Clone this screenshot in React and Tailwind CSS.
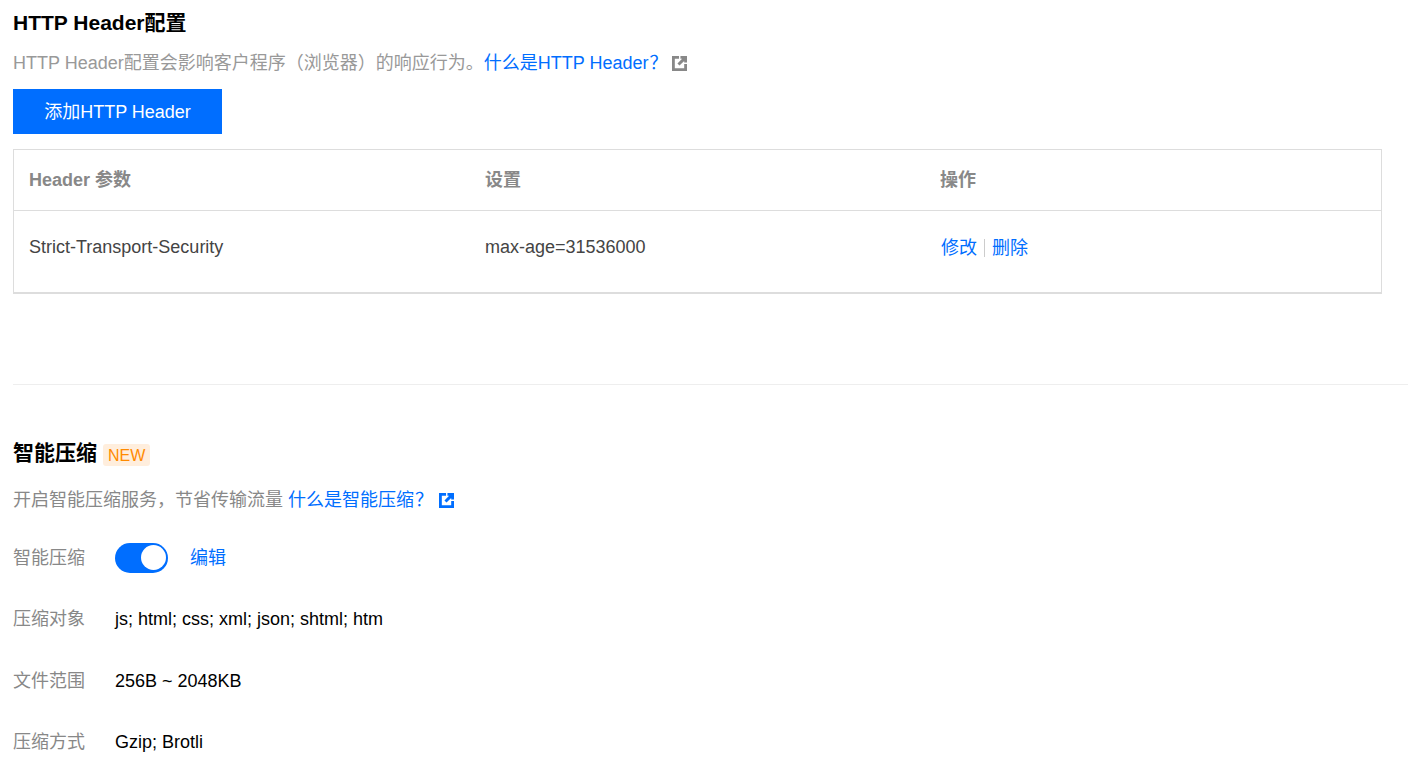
const fontStack = { fontFamily: '"Liberation Sans", "Noto Sans CJK SC", sans-serif' };

const ExternalIcon = ({ className }) => (
  <svg viewBox="0 0 16 16" className={className}>
    <path fill="currentColor" fillRule="evenodd" d="M0 0h7.5v3H3v10h10V8.5h3V16H0zM9 0h7v7h-3V5.2L8 10.2 5.8 8l5-5H9z" />
  </svg>
);

const InfoRow = ({ label, children }) => (
  <div className="flex items-center h-[61.3px]">
    <span className="w-[102px] text-[#888888]">{label}</span>
    {children}
  </div>
);

export default function App() {
  return (
    <div className="w-[1408px] h-[765px] overflow-hidden bg-white pl-[13px] text-[18px] text-black" style={fontStack}>
      <h2 className="h-[46px] pt-[9px] leading-[28px] text-[21px] font-bold">HTTP Header配置</h2>
      <p className="flex items-center h-[35px] text-[#999999]">
        HTTP Header配置会影响客户程序（浏览器）的响应行为。
        <a className="text-[#006eff]">什么是HTTP Header<span className="ml-px">？</span></a>
        <ExternalIcon className="w-[15px] h-[15px] text-[#888888] ml-[5px]" />
      </p>
      <button className="block mt-[8px] w-[209px] h-[45px] pt-[1px] bg-[#006eff] text-white">添加HTTP Header</button>

      <div className="mt-[15px] w-[1369px] h-[145px] border border-[#dddddd] border-b-2">
        <div className="grid grid-cols-[456px_455px_1fr] items-center h-[61px] pt-[1px] border-b border-[#dddddd] pl-[15px] font-bold text-[#888888]">
          <span>Header 参数</span>
          <span>设置</span>
          <span>操作</span>
        </div>
        <div className="grid grid-cols-[456px_456px_1fr] items-center h-[72px] pl-[15px] text-[#444444]">
          <span>Strict-Transport-Security</span>
          <span>max-age=31536000</span>
          <span className="flex items-center pt-[2px] text-[#006eff]">
            修改
            <span className="mx-[7px] w-px h-[18px] bg-[#cccccc]" />
            删除
          </span>
        </div>
      </div>

      <div className="mt-[90px] h-px bg-[#eeeeee]" />

      <div className="flex items-center mt-[56px] h-[24px]">
        <h2 className="text-[21px] leading-[24px] font-bold">智能压缩</h2>
        <span className="ml-[6px] mt-[3px] px-[5px] h-[22px] leading-[24px] rounded-[3px] bg-[#ffeedd] text-[#ff8a00] text-[16px]">NEW</span>
      </div>
      <p className="flex items-center mt-[22px] h-[26px] text-[#888888]">
        开启智能压缩服务，节省传输流量
        <a className="ml-[5px] text-[#006eff]">什么是智能压缩<span className="ml-px">？</span></a>
        <ExternalIcon className="w-[15px] h-[15px] text-[#006eff] ml-[6px]" />
      </p>

      <div className="mt-[15px]">
        <InfoRow label="智能压缩">
          <span className="flex items-center justify-end mb-[2px] w-[53px] h-[30px] rounded-full bg-[#006eff] pr-[2px]">
            <span className="w-[25px] h-[25px] rounded-full bg-white" />
          </span>
          <a className="ml-[22px] text-[#006eff]">编辑</a>
        </InfoRow>
        <InfoRow label="压缩对象"><span>js; html; css; xml; json; shtml; htm</span></InfoRow>
        <InfoRow label="文件范围"><span>256B ~ 2048KB</span></InfoRow>
        <InfoRow label="压缩方式"><span>Gzip; Brotli</span></InfoRow>
      </div>
    </div>
  );
}
